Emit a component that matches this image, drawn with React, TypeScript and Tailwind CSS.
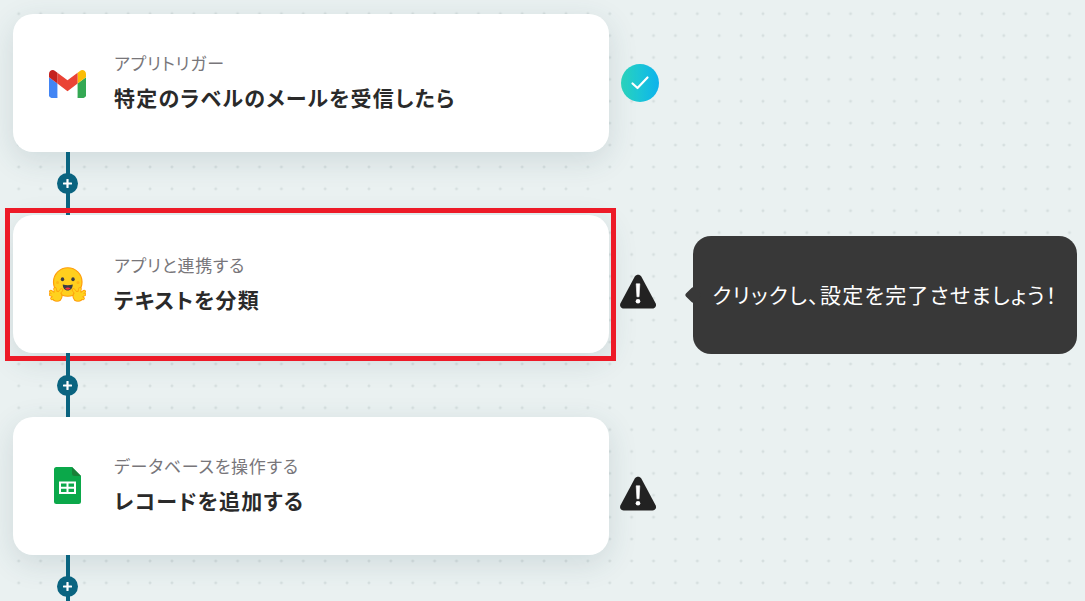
import React from "react";

const font = "[font-family:'Noto_Sans_CJK_JP','Noto_Sans',sans-serif] [font-feature-settings:'palt']";

function Gmail() {
  return (
    <svg className="mt-[2px]" width="37" height="28" viewBox="52 42 88 66" aria-hidden="true">
      <path fill="#4285f4" d="M58 108h14V74L52 59v43c0 3.32 2.69 6 6 6" />
      <path fill="#34a853" d="M120 108h14c3.32 0 6-2.69 6-6V59l-20 15" />
      <path fill="#fbbc04" d="M120 48v26l20-15v-8c0-7.42-8.47-11.65-14.4-7.2" />
      <path fill="#ea4335" d="M72 74V48l24 18 24-18v26L96 92" />
      <path fill="#c5221f" d="M52 51v8l20 15V48l-5.6-4.2c-5.94-4.45-14.4-.22-14.4 7.2" />
    </svg>
  );
}

function Hand({ flip }: { flip?: boolean }) {
  const fingers = "M15 58 3.500 49M15 58 3 55M15 58 6 63M15 58 12 44M15 58 25 46";
  return (
    <g transform={flip ? "translate(74 0) scale(-1 1)" : undefined}>
      <path d={fingers} stroke="#FF9D0B" strokeWidth="7" strokeLinecap="round" fill="none" />
      <circle cx="16" cy="58.500" r="11" fill="#FF9D0B" />
      <path d={fingers} stroke="#FFD21E" strokeWidth="4" strokeLinecap="round" fill="none" />
      <circle cx="16" cy="58.500" r="9" fill="#FFD21E" />
    </g>
  );
}

function HuggingFace() {
  return (
    <svg width="37" height="35" viewBox="0 0 74 70" aria-hidden="true">
      <circle cx="37.500" cy="30" r="28.500" fill="#FFCF1E" stroke="#FF9D0B" strokeWidth="2.400" />
      <ellipse cx="27" cy="24.500" rx="3.400" ry="3.800" fill="#3A3B45" />
      <ellipse cx="48" cy="24.500" rx="3.400" ry="3.800" fill="#3A3B45" />
      <circle cx="17" cy="31" r="3" fill="#FF9D0B" opacity="0.5" />
      <circle cx="58" cy="31" r="3" fill="#FF9D0B" opacity="0.5" />
      <path d="M27.500 35c6.500 2.200 13.500 2.200 20 0 0 7.500-4.500 12-10 12s-10-4.500-10-12Z" fill="#3A3B45" />
      <path d="M32 43c3-3 8-3 11 0-3 3.500-8 3.500-11 0Z" fill="#FF323D" />
      <Hand />
      <Hand flip />
    </svg>
  );
}

function Sheets() {
  return (
    <svg width="27" height="37" viewBox="0 0 27 37" aria-hidden="true">
      <path d="M2.500 0H18l9 9v25.500a2.500 2.500 0 0 1-2.500 2.500h-22A2.500 2.500 0 0 1 0 34.500v-32A2.500 2.500 0 0 1 2.500 0Z" fill="#0BA84A" />
      <path d="M18 0l9 9h-6.500A2.500 2.500 0 0 1 18 6.500Z" fill="#188038" />
      <path fillRule="evenodd" d="M5 14.500h17v12.500H5Zm2 2v3.300h5.500v-3.300Zm7.500 0v3.300H20v-3.300ZM7 21.800v3.200h5.500v-3.200Zm7.500 0v3.200H20v-3.200Z" fill="#fff" />
    </svg>
  );
}

function Warning() {
  return (
    <svg className="mt-[16px]" width="38" height="36" viewBox="0 0 38 36" aria-hidden="true">
      <path d="M15.800 2.600c1.500-2.500 5-2.500 6.500 0l14.300 26.600c1.300 2.500-.4 5.300-3.200 5.300H4.700c-2.800 0-4.500-2.800-3.200-5.300Z" fill="#222222" />
      <path d="M17.200 9.800h3.600l-.7 13h-2.200Z" fill="#fff" stroke="#fff" strokeWidth="0.6" strokeLinejoin="round" />
      <circle cx="19" cy="27.300" r="2.300" fill="#fff" />
    </svg>
  );
}

function Check() {
  return (
    <div className="ml-[2px] flex h-[38px] w-[38px] items-center justify-center rounded-full bg-gradient-to-r from-[#2cd6bd] to-[#0fb2ec]">
      <svg width="20" height="16" viewBox="0 0 20 16" fill="none" aria-hidden="true">
        <path d="M2.500 8.500 7.500 13 17.500 2.500" stroke="#fff" strokeWidth="2.200" strokeLinecap="round" strokeLinejoin="round" />
      </svg>
    </div>
  );
}

function Connector() {
  return (
    <div className="relative ml-[52.500px] flex h-[63.500px] w-[4.500px] items-center justify-center bg-[#0a6480]">
      <div className="flex h-[21px] w-[21px] shrink-0 items-center justify-center rounded-full bg-[#0a6480]">
        <svg width="9" height="9" viewBox="0 0 9 9" aria-hidden="true">
          <path d="M4.500 0.800v7.400M0.800 4.500h7.400" stroke="#fff" strokeWidth="2.200" strokeLinecap="round" />
        </svg>
      </div>
    </div>
  );
}

function Step({
  icon,
  sub,
  title,
  status,
  selected,
}: {
  icon: React.ReactNode;
  sub: string;
  title: string;
  status: React.ReactNode;
  selected?: boolean;
}) {
  return (
    <div className="flex h-[138px] items-center">
      <div className="relative flex h-full w-[596px] items-center rounded-[20px] bg-white shadow-[0_8px_30px_rgba(40,80,90,0.14)]">
        <div className="flex w-[100px] justify-center pl-[9px]">{icon}</div>
        <div className="mt-[-3px] ml-[1px] flex flex-col">
          <span className="text-[17px] leading-[22px] tracking-[0.77px] text-[#78767a]">{sub}</span>
          <span className="mt-[10px] text-[21px] leading-[26px] font-bold tracking-[1.200px] text-[#2a2a2a]">{title}</span>
        </div>
        {selected && <div className="absolute top-[-7.500px] right-[-7px] bottom-[-7.500px] left-[-8px] border-[5px] border-[#ed1a27]" />}
      </div>
      <div className="ml-[10px]">{status}</div>
    </div>
  );
}

export default function App() {
  return (
    <div
      className={`relative h-[601px] w-[1085px] overflow-hidden bg-[#eaf1f1] bg-[radial-gradient(circle,#d6dfdf_1.300px,transparent_1.700px)] bg-[size:21.900px_21.900px] bg-[position:7.750px_2.750px] pt-[13.750px] pl-[13px] ${font}`}
    >
      <Step icon={<Gmail />} sub="アプリトリガー" title="特定のラベルのメールを受信したら" status={<Check />} />
      <Connector />
      <div className="relative">
        <Step icon={<HuggingFace />} sub="アプリと連携する" title="テキストを分類" status={<Warning />} selected />
        <div className="absolute top-[20.500px] left-[680px] flex h-[118px] w-[384px] items-center justify-center rounded-[18px] bg-[#383838] text-[21px] tracking-[1.300px] text-white">
          <span className="absolute top-[53px] left-[-6px] h-[12px] w-[12px] rotate-45 rounded-[2px] bg-[#383838]" />
          クリックし、設定を完了させましょう！
        </div>
      </div>
      <Connector />
      <Step icon={<Sheets />} sub="データベースを操作する" title="レコードを追加する" status={<Warning />} />
      <Connector />
    </div>
  );
}
